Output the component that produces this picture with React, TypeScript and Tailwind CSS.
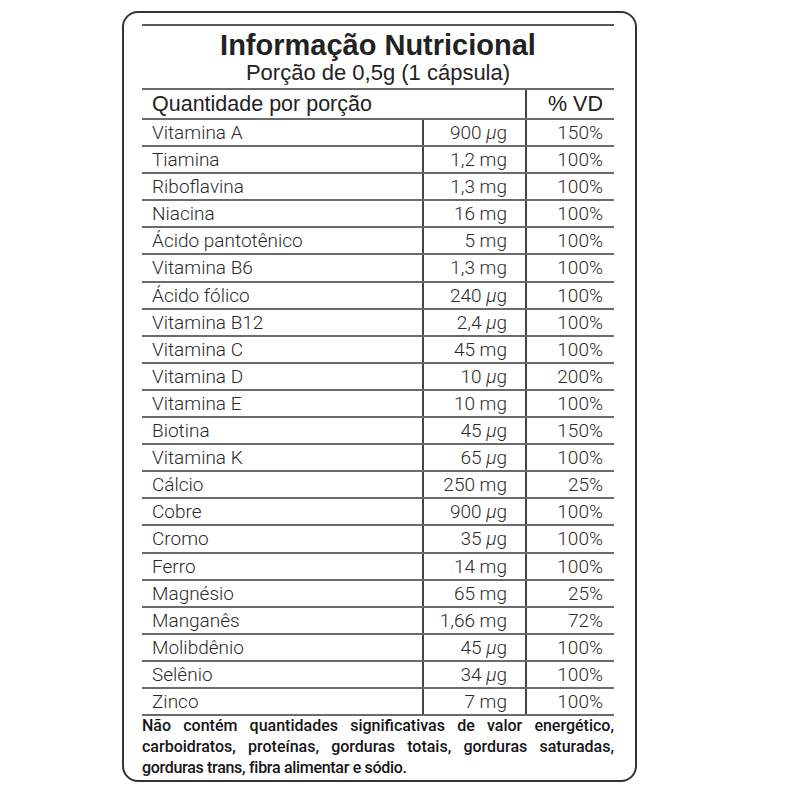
const rows: [string, string, string][] = [
  ["Vitamina A", "900 µg", "150%"],
  ["Tiamina", "1,2 mg", "100%"],
  ["Riboflavina", "1,3 mg", "100%"],
  ["Niacina", "16 mg", "100%"],
  ["Ácido pantotênico", "5 mg", "100%"],
  ["Vitamina B6", "1,3 mg", "100%"],
  ["Ácido fólico", "240 µg", "100%"],
  ["Vitamina B12", "2,4 µg", "100%"],
  ["Vitamina C", "45 mg", "100%"],
  ["Vitamina D", "10 µg", "200%"],
  ["Vitamina E", "10 mg", "100%"],
  ["Biotina", "45 µg", "150%"],
  ["Vitamina K", "65 µg", "100%"],
  ["Cálcio", "250 mg", "25%"],
  ["Cobre", "900 µg", "100%"],
  ["Cromo", "35 µg", "100%"],
  ["Ferro", "14 mg", "100%"],
  ["Magnésio", "65 mg", "25%"],
  ["Manganês", "1,66 mg", "72%"],
  ["Molibdênio", "45 µg", "100%"],
  ["Selênio", "34 µg", "100%"],
  ["Zinco", "7 mg", "100%"],
]

function Amount({ value }: { value: string }) {
  if (value.endsWith("µg")) {
    return (
      <span>
        {value.slice(0, -2)}
        <span className="italic">µ</span>g
      </span>
    )
  }
  return <span>{value}</span>
}

export default function App() {
  return (
    <div className="w-[800px] h-[800px] bg-white pt-[11px] pl-[122px]">
      <div className="w-[515px] h-[771px] border-2 border-[#333] rounded-[16px] pt-[11px] pl-[18px] pr-[21px] font-['Liberation_Sans',sans-serif] text-[#222]">
        <div className="h-[2px] bg-[#5a5a5a]" />
        <div className="mt-[4px] text-center text-[29px] leading-[30px] font-bold">Informação Nutricional</div>
        <div className="mt-[1px] text-center text-[22px] leading-[24px]">Porção de 0,5g (1 cápsula)</div>
        <div className="mt-[3px] h-[2px] bg-[#6b6b6b]" />
        <div className="grid grid-cols-[383px_89px] h-[30px] border-b-2 border-[#6b6b6b] text-[21.5px] leading-[28px]">
          <div className="pl-[10px]">Quantidade por porção</div>
          <div className="border-l-2 border-[#444] text-right pr-[11px]">% VD</div>
        </div>
        <div className="font-['Roboto',sans-serif] font-light text-[#2a2a2a] text-[19px]">
          {rows.map(([name, amount, vd]) => (
            <div key={name} className="grid grid-cols-[280px_103px_89px] h-[27.1px] border-b-2 border-[#6b6b6b] leading-[25px]">
              <div className="pl-[10px]">{name}</div>
              <div className="border-l-2 border-[#444] text-right pr-[18px]">
                <Amount value={amount} />
              </div>
              <div className="border-l-2 border-[#444] text-right pr-[11px]">{vd}</div>
            </div>
          ))}
        </div>
        <div className="-mt-[1px] font-['Roboto',sans-serif] font-medium text-[16px] leading-[21px] text-[#151515]">
          <div className="text-justify [text-align-last:justify]">Não contém quantidades significativas de valor energético,</div>
          <div className="text-justify [text-align-last:justify]">carboidratos, proteínas, gorduras totais, gorduras saturadas,</div>
          <div className="tracking-[-0.3px]">gorduras trans, fibra alimentar e sódio.</div>
        </div>
      </div>
    </div>
  )
}
